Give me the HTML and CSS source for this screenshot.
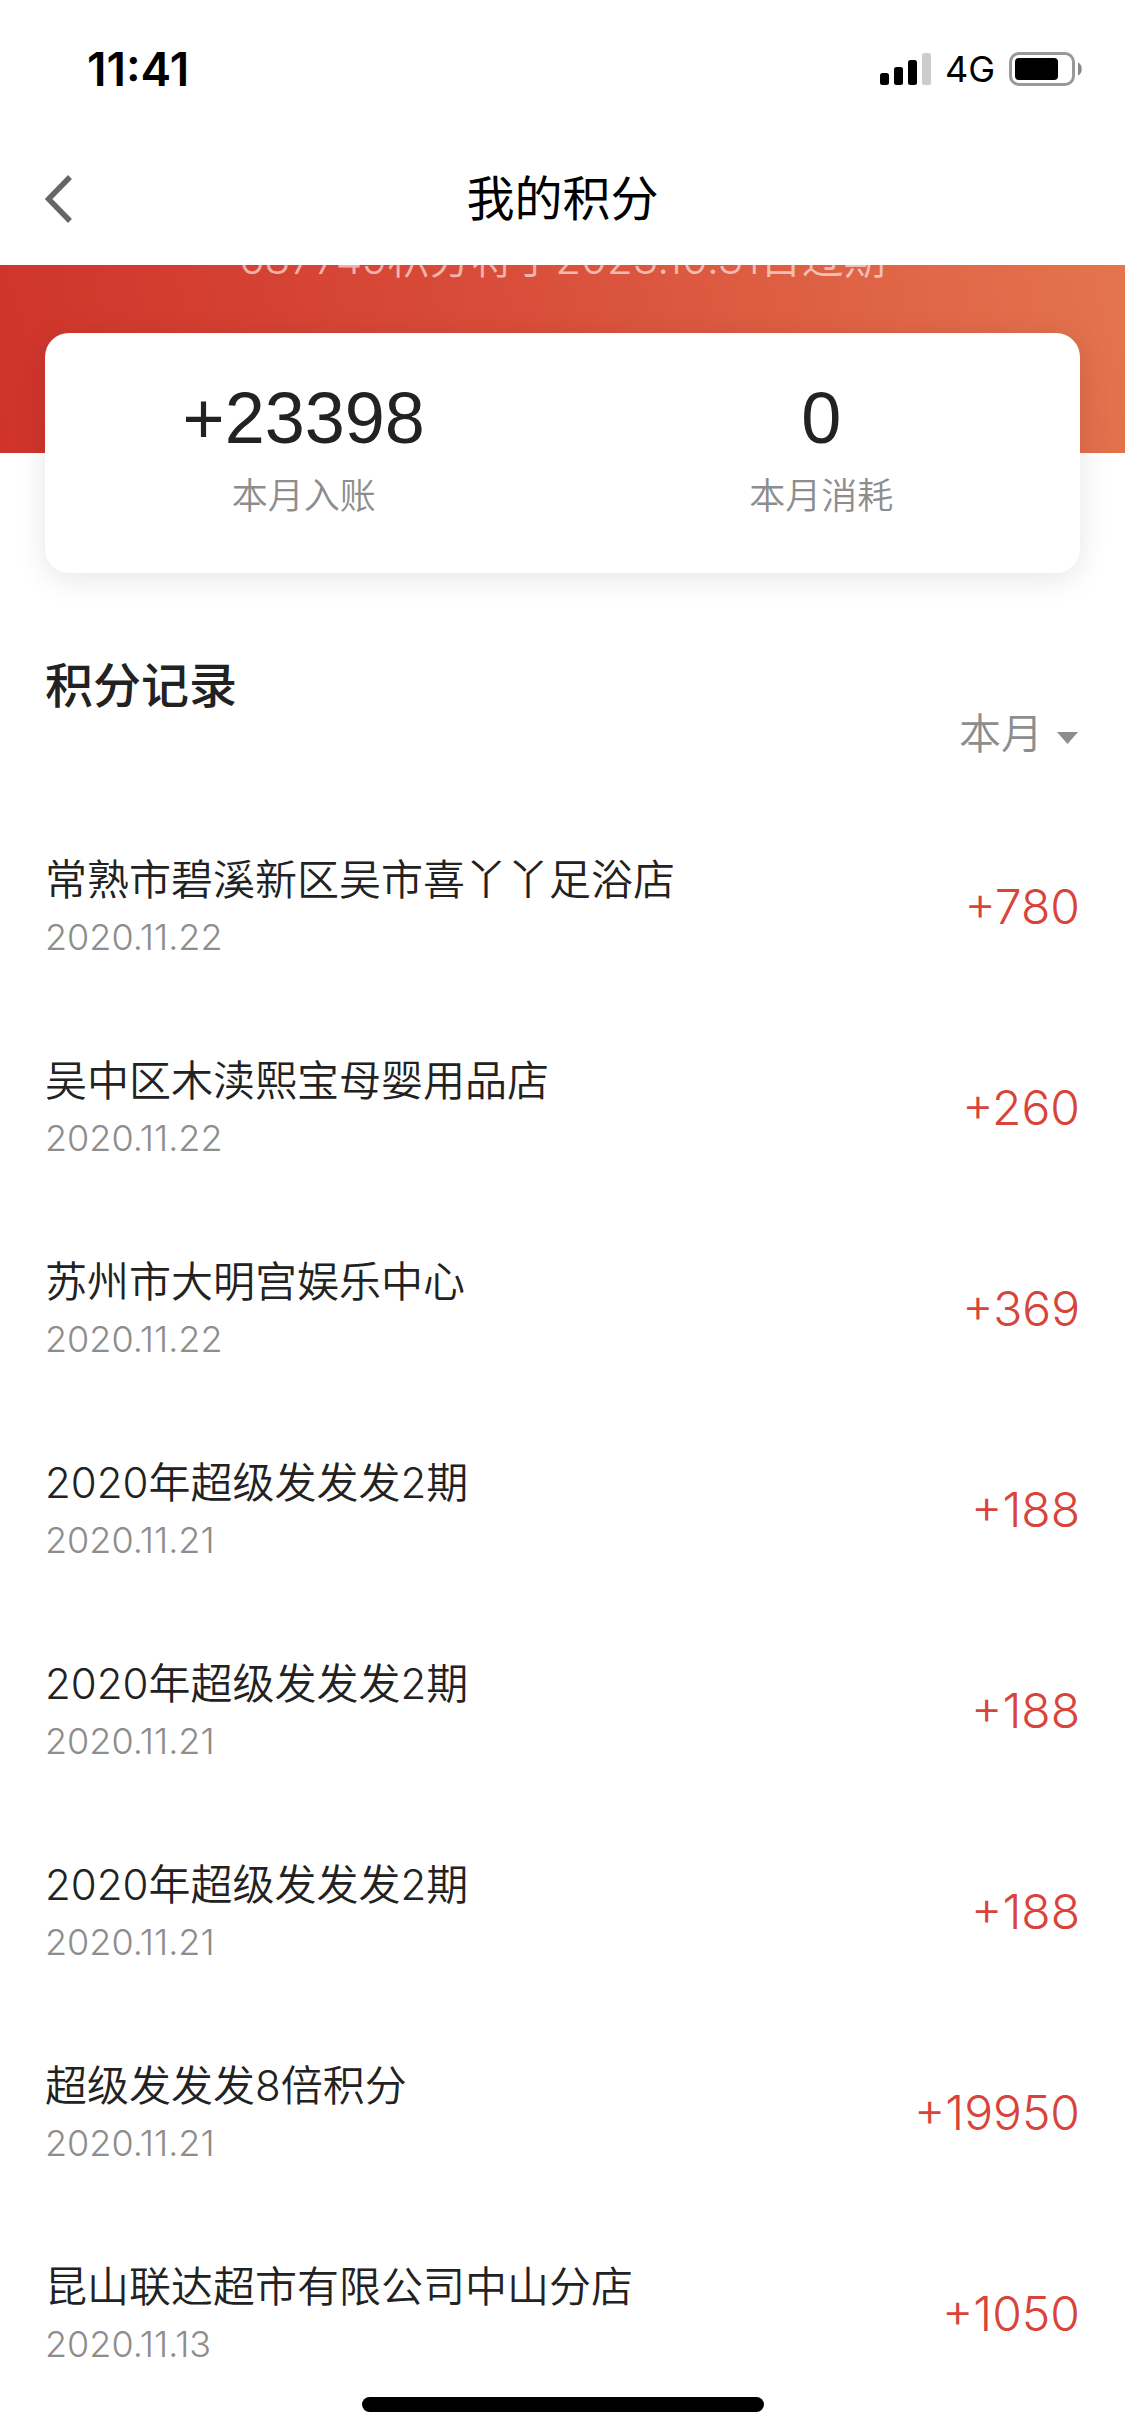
FILE: index.html
```html
<!DOCTYPE html>
<html lang="zh-CN">
<head>
<meta charset="utf-8">
<meta name="viewport" content="width=device-width, initial-scale=1">
<title>我的积分</title>
<link rel="stylesheet" href="styles.css">
</head>
<body>
<header class="top">
  <div class="status">
    <span class="status-time">11:41</span>
    <div class="status-icons">
      <svg width="51" height="34" viewBox="0 0 51 34" aria-hidden="true">
        <rect x="0" y="21" width="9" height="12" rx="2.5"/>
        <rect x="14" y="15" width="9" height="18" rx="2.5"/>
        <rect x="28" y="8" width="9" height="25" rx="2.5"/>
        <rect x="42" y="1" width="9" height="32" rx="2.5" fill="#ccc"/>
      </svg>
      <span class="network">4G</span>
      <svg width="74" height="34" viewBox="0 0 74 34" aria-hidden="true">
        <rect x="1.5" y="1.5" width="63" height="31" rx="8.5" fill="none" stroke="#999" stroke-width="3"/>
        <rect x="6" y="6" width="43" height="22" rx="4"/>
        <path d="M69 10.5c5 2 5 11 0 13z" fill="#888"/>
      </svg>
    </div>
  </div>
  <nav class="nav">
    <button class="back" type="button" aria-label="返回">
      <svg width="27" height="48" viewBox="0 0 27 48" fill="none" stroke="#666" stroke-width="5.5" aria-hidden="true"><path d="M25 2 3.500 24 25 46"/></svg>
    </button>
    <h1 class="nav-title">我的积分</h1>
  </nav>
</header>
<main>
  <section class="hero">
    <p class="expiry">687749积分将于2023.10.31日过期</p>
  </section>
  <section class="summary">
    <div class="stat">
      <strong class="stat-value">+23398</strong>
      <span class="stat-label">本月入账</span>
    </div>
    <div class="stat">
      <strong class="stat-value">0</strong>
      <span class="stat-label">本月消耗</span>
    </div>
  </section>
  <section class="records">
    <div class="records-head">
      <h2 class="records-title">积分记录</h2>
      <div class="filter">
        <select class="filter-select" aria-label="时间范围"><option>本月</option></select>
        <svg class="filter-arrow" width="21" height="12" viewBox="0 0 21 12" aria-hidden="true"><path d="M0 0h21L10.500 12z" fill="#8d8d8d"/></svg>
      </div>
    </div>
    <ul class="list">
      <li class="row"><div class="row-main"><span class="row-title">常熟市碧溪新区吴市喜丫丫足浴店</span><time class="row-date">2020.11.22</time></div><span class="amount">+780</span></li>
      <li class="row"><div class="row-main"><span class="row-title">吴中区木渎熙宝母婴用品店</span><time class="row-date">2020.11.22</time></div><span class="amount">+260</span></li>
      <li class="row"><div class="row-main"><span class="row-title">苏州市大明宫娱乐中心</span><time class="row-date">2020.11.22</time></div><span class="amount">+369</span></li>
      <li class="row"><div class="row-main"><span class="row-title">2020年超级发发发2期</span><time class="row-date">2020.11.21</time></div><span class="amount">+188</span></li>
      <li class="row"><div class="row-main"><span class="row-title">2020年超级发发发2期</span><time class="row-date">2020.11.21</time></div><span class="amount">+188</span></li>
      <li class="row"><div class="row-main"><span class="row-title">2020年超级发发发2期</span><time class="row-date">2020.11.21</time></div><span class="amount">+188</span></li>
      <li class="row"><div class="row-main"><span class="row-title">超级发发发8倍积分</span><time class="row-date">2020.11.21</time></div><span class="amount">+19950</span></li>
      <li class="row"><div class="row-main"><span class="row-title">昆山联达超市有限公司中山分店</span><time class="row-date">2020.11.13</time></div><span class="amount">+1050</span></li>
    </ul>
  </section>
</main>
<div class="home-bar"></div>
</body>
</html>
```
FILE: styles.css
```css
* {
  box-sizing: border-box;
}

body {
  margin: 0;
  background: #fff;
  color: #222;
  font-family: Inter, "Noto Sans CJK SC", sans-serif;
  font-size: 42px;
  line-height: 60px;
}

h1, h2, p, ul {
  margin: 0;
  padding: 0;
}

/* Status bar and navigation */
.top {
  position: sticky;
  top: 0;
  z-index: 2;
  background: #fff;
  color: #000;
}

.status {
  display: flex;
  justify-content: space-between;
  align-items: center;
  height: 132px;
  padding: 6px 42px 0 87px;
}

.status-time {
  font-size: 46px;
  font-weight: 600;
}

.status-icons {
  display: flex;
  align-items: center;
  gap: 14px;
}

.network {
  font-size: 36px;
  font-weight: 400;
}

.nav {
  display: grid;
  grid-template-columns: 90px 1fr 90px;
  align-items: center;
  height: 133px;
}

.back {
  display: flex;
  padding: 0 0 0 45px;
  border: 0;
  background: none;
}

.nav-title {
  font-size: 48px;
  font-weight: 400;
  text-align: center;
}

/* Banner and monthly summary */
.hero {
  overflow: hidden;
  padding-bottom: 164px;
  background: linear-gradient(75deg, #cf332a 0%, #d94e3a 48%, #e4744f 100%);
}

.expiry {
  margin-top: -36px;
  color: rgba(255, 255, 255, 0.6);
  font-weight: 350;
  text-align: center;
}

.summary {
  display: grid;
  grid-template-columns: 1fr 1fr;
  margin: -120px 45px 0;
  height: 240px;
  padding-top: 46px;
  border-radius: 24px;
  background: #fff;
  box-shadow: 0 6px 30px rgba(0, 0, 0, 0.1);
}

.stat {
  display: flex;
  flex-direction: column;
  align-items: center;
  gap: 12px;
}

.stat-value {
  font-family: "Liberation Sans", sans-serif;
  font-size: 72px;
  font-weight: 400;
  line-height: 78px;
}

.stat-label {
  color: #8d8d8d;
  font-size: 36px;
  font-weight: 350;
  line-height: 54px;
}

/* Point records */
.records {
  padding: 83px 45px 20px;
}

.records-head {
  display: flex;
  justify-content: space-between;
  align-items: flex-start;
  padding-bottom: 44px;
}

.records-title {
  font-size: 48px;
  font-weight: 500;
}

.filter {
  position: relative;
  margin-top: 48px;
}

.filter-select {
  display: block;
  padding: 0 36px 0 0;
  border: 0;
  background: none;
  color: #8d8d8d;
  font: inherit;
  font-weight: 350;
  line-height: 60px;
  appearance: none;
}

.filter-arrow {
  position: absolute;
  top: 28px;
  right: 2px;
  pointer-events: none;
}

.list {
  list-style: none;
}

.row {
  display: flex;
  justify-content: space-between;
  align-items: center;
  padding: 42px 0 45px;
}

.row-main {
  display: flex;
  flex-direction: column;
}

.row-title {
  font-weight: 350;
}

.row-date {
  color: #8d8d8d;
  font-size: 36px;
  font-weight: 300;
  line-height: 54px;
}

.amount {
  color: #d8433a;
  font-size: 48px;
  font-weight: 300;
}

.home-bar {
  position: fixed;
  bottom: 24px;
  left: 50%;
  width: 402px;
  height: 15px;
  margin-left: -201px;
  border-radius: 8px;
  background: #000;
}
```
